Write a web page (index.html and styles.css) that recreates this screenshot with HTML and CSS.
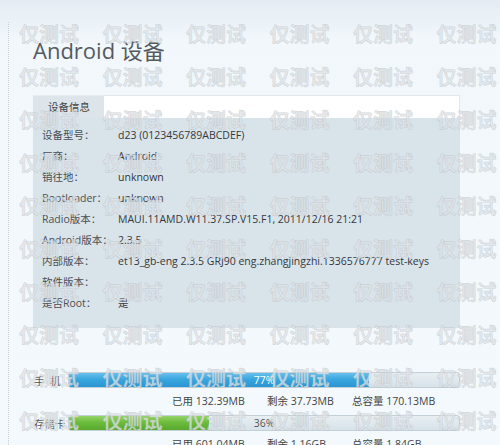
FILE: index.html
```html
<!DOCTYPE html>
<html lang="zh-CN">
<head>
    <meta charset="UTF-8">
    <title>Android 设备</title>
    <link rel="stylesheet" href="styles.css">
</head>
<body>
    <div class="page">
        <h1 class="title">Android 设备</h1>

        <div class="tabs">
            <div class="tab tab-active">设备信息</div>
            <div class="tab-rest"></div>
        </div>

        <div class="panel">
            <div class="row"><span class="label">设备型号：</span><span class="value">d23 (0123456789ABCDEF)</span></div>
            <div class="row"><span class="label">厂商：</span><span class="value">Android</span></div>
            <div class="row"><span class="label">销往地：</span><span class="value">unknown</span></div>
            <div class="row"><span class="label">Bootloader：</span><span class="value">unknown</span></div>
            <div class="row"><span class="label">Radio版本：</span><span class="value">MAUI.11AMD.W11.37.SP.V15.F1, 2011/12/16 21:21</span></div>
            <div class="row"><span class="label">Android版本：</span><span class="value">2.3.5</span></div>
            <div class="row"><span class="label">内部版本：</span><span class="value">et13_gb-eng 2.3.5 GRJ90 eng.zhangjingzhi.1336576777 test-keys</span></div>
            <div class="row"><span class="label">软件版本：</span><span class="value"></span></div>
            <div class="row"><span class="label">是否Root：</span><span class="value">是</span></div>
        </div>

        <div class="storage">
            <div class="bar-row">
                <span class="bar-label">手&nbsp;&nbsp;机</span>
                <div class="bar">
                    <div class="bar-fill fill-blue" style="width: 77%"></div>
                    <span class="bar-text text-light">77%</span>
                </div>
            </div>
            <div class="stats">
                <span class="stat stat-used">已用 132.39MB</span>
                <span class="stat stat-free">剩余 37.73MB</span>
                <span class="stat">总容量 170.13MB</span>
            </div>

            <div class="bar-row">
                <span class="bar-label">存储卡</span>
                <div class="bar">
                    <div class="bar-fill fill-green" style="width: 36%"></div>
                    <span class="bar-text">36%</span>
                </div>
            </div>
            <div class="stats">
                <span class="stat stat-used">已用 601.04MB</span>
                <span class="stat stat-free">剩余 1.16GB</span>
                <span class="stat">总容量 1.84GB</span>
            </div>
        </div>
    </div>

    <div id="watermark" class="watermark"></div>

    <script>
        // fill the overlay with the repeated test mark
        var mark = document.getElementById('watermark');
        for (var i = 0; i < 60; i++) {
            var s = document.createElement('span');
            s.textContent = '仅测试';
            mark.appendChild(s);
        }
    </script>
</body>
</html>
```

FILE: styles.css
```css
body {
    margin: 0;
    height: 445px;
    overflow: hidden;
    font-family: 'Open Sans', 'Noto Sans CJK SC', sans-serif;
    color: #3a3f44;
    background: linear-gradient(to bottom, #e4ecf3 0px, #f1f7fb 40px, #f3f9fc 100%);
    position: relative;
}

.page {
    margin: 22px 0 0 8px;
    border-left: 1px dotted #c9d1d8;
    padding: 13px 40px 0 24px;
    height: 423px;
    box-sizing: border-box;
    overflow: hidden;
}

.title {
    margin: 0;
    font-size: 22px;
    line-height: 30px;
    font-weight: normal;
    color: #555a5f;
}

.tabs {
    display: flex;
    margin-top: 30px;
    height: 23px;
}

.tab {
    width: 71px;
    padding-left: 15px;
    box-sizing: border-box;
    font-size: 10.5px;
    line-height: 23px;
    color: #444;
}

.tab-active {
    background: #dde5eb;
    border-top: 1px solid #e6ecf0;
}

.tab-rest {
    flex: 1;
    background: #fff;
    border-top: 1px solid #e1e8ed;
    border-right: 1px solid #e1e8ed;
}

.panel {
    background: #d9e3ea;
    padding: 7px 9px 14px;
}

.row {
    display: flex;
    height: 21px;
    line-height: 21px;
    font-size: 10.5px;
    white-space: nowrap;
}

.label {
    width: 76px;
    flex: none;
    color: #4a4f54;
}

.value {
    color: #33383d;
}

.storage {
    margin-top: 44px;
}

.bar-row {
    display: flex;
    align-items: center;
    height: 16px;
}

.bar-label {
    width: 34px;
    flex: none;
    padding-left: 1px;
    font-size: 10.5px;
    color: #555;
}

.bar {
    flex: 1;
    height: 16px;
    position: relative;
    background: linear-gradient(to bottom, #e8eff3, #d7e2e9);
    border: 1px solid #c3d0d8;
    border-radius: 3px;
    box-sizing: border-box;
    overflow: hidden;
}

.bar-fill {
    height: 100%;
}

.fill-blue {
    background: linear-gradient(to bottom, #68c0ec 0%, #3aa6df 45%, #2a95d1 100%);
}

.fill-green {
    background: linear-gradient(to bottom, #96d46a 0%, #6cbc3d 45%, #58a82d 100%);
}

.bar-text {
    position: absolute;
    left: 0;
    right: 0;
    top: 0;
    text-align: center;
    font-size: 10.5px;
    line-height: 14px;
    color: #555;
}

.text-light {
    color: #fff;
}

.stats {
    display: flex;
    padding-left: 139px;
    height: 27px;
    line-height: 27px;
    font-size: 10.5px;
    color: #444;
    white-space: nowrap;
}

.stat-used {
    width: 95px;
}

.stat-free {
    width: 85px;
}

.watermark {
    position: absolute;
    left: 19px;
    top: 24px;
    right: 0;
    bottom: 0;
    overflow: hidden;
    display: grid;
    grid-template-columns: repeat(6, 83.5px);
    grid-auto-rows: 43px;
    pointer-events: none;
}

.watermark span {
    font-family: 'Noto Sans CJK SC', sans-serif;
    font-size: 20px;
    line-height: 20px;
    font-weight: bold;
    white-space: nowrap;
    color: rgba(222, 226, 230, 0.75);
    -webkit-text-stroke: 0.5px rgba(150, 156, 162, 0.35);
}
```
